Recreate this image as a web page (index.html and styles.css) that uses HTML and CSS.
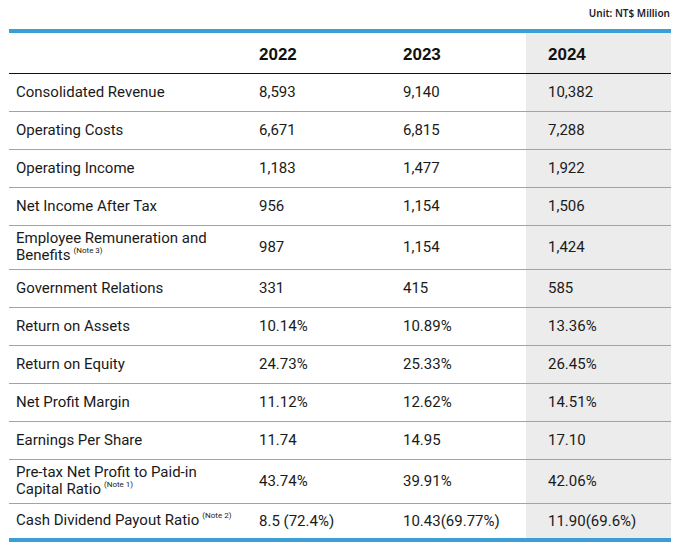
FILE: index.html
```html
<!DOCTYPE html>
<html>
<head>
<meta charset="utf-8">
<link rel="stylesheet" href="styles.css">
</head>
<body>
<div class="wrap">
  <div class="unit">Unit: NT$ Million</div>
  <table class="fin">
    <colgroup>
      <col class="c-label"><col class="c-num"><col class="c-num3"><col class="c-cur">
    </colgroup>
    <thead>
      <tr><th></th><th>2022</th><th>2023</th><th class="cur">2024</th></tr>
    </thead>
    <tbody>
      <tr><td>Consolidated Revenue</td><td>8,593</td><td>9,140</td><td class="cur">10,382</td></tr>
      <tr><td>Operating Costs</td><td>6,671</td><td>6,815</td><td class="cur">7,288</td></tr>
      <tr><td>Operating Income</td><td>1,183</td><td>1,477</td><td class="cur">1,922</td></tr>
      <tr><td>Net Income After Tax</td><td>956</td><td>1,154</td><td class="cur">1,506</td></tr>
      <tr class="two"><td>Employee Remuneration and<br>Benefits<sup>(Note 3)</sup></td><td>987</td><td>1,154</td><td class="cur">1,424</td></tr>
      <tr><td>Government Relations</td><td>331</td><td>415</td><td class="cur">585</td></tr>
      <tr><td>Return on Assets</td><td>10.14%</td><td>10.89%</td><td class="cur">13.36%</td></tr>
      <tr><td>Return on Equity</td><td>24.73%</td><td>25.33%</td><td class="cur">26.45%</td></tr>
      <tr><td>Net Profit Margin</td><td>11.12%</td><td>12.62%</td><td class="cur">14.51%</td></tr>
      <tr><td>Earnings Per Share</td><td>11.74</td><td>14.95</td><td class="cur">17.10</td></tr>
      <tr class="two"><td>Pre-tax Net Profit to Paid-in<br>Capital Ratio<sup>(Note 1)</sup></td><td>43.74%</td><td>39.91%</td><td class="cur">42.06%</td></tr>
      <tr class="last"><td>Cash Dividend Payout Ratio<sup>(Note 2)</sup></td><td>8.5 (72.4%)</td><td>10.43(69.77%)</td><td class="cur">11.90(69.6%)</td></tr>
    </tbody>
  </table>
</div>
</body>
</html>
```
FILE: styles.css
```css
html, body { margin: 0; padding: 0; background: #fff; }
body { font-family: Roboto, "Noto Sans", sans-serif; color: #1a1a1a; }
.wrap { padding: 0 11px 0 9px; }
.unit {
  text-align: right;
  font-family: "Noto Sans", sans-serif;
  font-size: 10px;
  font-weight: 600;
  color: #222;
  padding-top: 7px;
  height: 29px;
  box-sizing: border-box;
  padding-right: 1px;
  line-height: 12px;
}
.fin {
  width: 662px;
  border-collapse: collapse;
  table-layout: fixed;
  border-top: 4px solid #3a9fd6;
  border-bottom: 4px solid #3a9fd6;
}
.c-label { width: 243px; }
.c-num { width: 144px; }
.c-num3 { width: 130px; }
.c-cur { width: 145px; }
.fin th {
  font-family: "Liberation Sans", Arial, sans-serif;
  font-weight: bold;
  font-size: 17px;
  text-align: left;
  height: 36px;
  padding: 4px 0 0 7px;
  border-bottom: 1px solid #111;
  color: #111;
}
.fin td {
  font-size: 15px;
  height: 37px;
  padding: 0 0 0 7px;
  border-bottom: 1px solid #a3a3a3;
  line-height: 17px;
  vertical-align: middle;
}
.fin tr.two td { height: 43px; }
.fin tr.last td { border-bottom: none; height: 34px; }
.fin .cur { background: #ececec; padding-left: 22px; }
.fin sup {
  font-size: 8px;
  vertical-align: 0;
  position: relative;
  top: -7px;
  margin-left: 3px;
}
```
